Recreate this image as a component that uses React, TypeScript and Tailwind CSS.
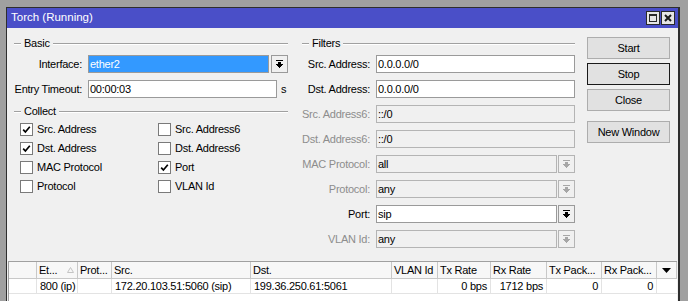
import React from "react";

const F = "font-['Liberation_Sans',Arial,sans-serif]";

function Arrow({ off }: { off?: boolean }) {
  const c = off ? "#a6a6a6" : "#000000";
  return (
    <svg width="7" height="8" viewBox="0 0 7 8" shapeRendering="crispEdges">
      <rect x="0" y="0" width="7" height="1" fill={c} />
      <rect x="2" y="2" width="3" height="2" fill={c} />
      <rect x="0" y="4" width="7" height="1" fill={c} />
      <rect x="1" y="5" width="5" height="1" fill={c} />
      <rect x="2" y="6" width="3" height="1" fill={c} />
      <rect x="3" y="7" width="1" height="1" fill={c} />
    </svg>
  );
}

function DropBtn({ off }: { off?: boolean }) {
  return (
    <div
      className={`w-[17px] h-[18px] flex items-center justify-center border ${
        off ? "border-[#b4b4b4]" : "border-[#9a9a9a]"
      } bg-[#f0f0f0]`}
    >
      <Arrow off={off} />
    </div>
  );
}

function GroupHead({ title }: { title: string }) {
  return (
    <div className="flex items-center h-[13px]">
      <div className="w-[7px] h-[2px] border-t border-[#a0a0a0] border-b border-b-white" />
      <span className="px-[3px] leading-[13px]">{title}</span>
      <div className="flex-1 h-[2px] border-t border-[#a0a0a0] border-b border-b-white" />
    </div>
  );
}

function Box({ value, off, selected, width }: { value: string; off?: boolean; selected?: boolean; width: string }) {
  return (
    <div
      className={`${width} h-[18px] border ${off ? "border-[#b4b4b4] bg-[#f0f0f0]" : "border-[#9a9a9a] bg-white"} flex items-center`}
    >
      {selected ? (
        <div className="flex-1 h-full bg-[#3399ff] text-white flex items-center pl-[1px]">{value}</div>
      ) : (
        <span className="pl-[1px]">{value}</span>
      )}
    </div>
  );
}

function Label({ text, off }: { text: string; off?: boolean }) {
  return (
    <div className={`w-[68px] shrink-0 flex justify-end whitespace-nowrap ${off ? "text-[#8d8d8d]" : "text-black"}`}>
      <span>{text}</span>
    </div>
  );
}

function FilterRow({ label, value, off, drop }: { label: string; value: string; off?: boolean; drop?: boolean }) {
  return (
    <div className="flex items-center h-[18px] mt-[7px]">
      <Label text={label} off={off} />
      <div className="ml-[6px] flex gap-[1px]">
        <Box value={value} off={off} width={drop ? "w-[181px]" : "w-[199px]"} />
        {drop && <DropBtn off={off} />}
      </div>
    </div>
  );
}

function Check({ label, on }: { label: string; on?: boolean }) {
  return (
    <div className="flex items-center h-[19px]">
      <div className="w-[13px] h-[13px] border border-[#7a7a7a] bg-white flex items-center justify-center">
        {on && (
          <svg width="9" height="9" viewBox="0 0 9 9">
            <polyline points="1.2,4.6 3.4,7 7.8,1.8" fill="none" stroke="#000" strokeWidth="1.7" />
          </svg>
        )}
      </div>
      <span className="ml-[4px]">{label}</span>
    </div>
  );
}

function Btn({ label, def, mt }: { label: string; def?: boolean; mt: string }) {
  return (
    <div
      className={`${mt} h-[22px] w-[83px] flex items-center justify-center bg-[#e1e1e1] border ${
        def ? "border-[#1a1a1a]" : "border-[#adadad]"
      }`}
    >
      {label}
    </div>
  );
}

const cols = [
  { w: "w-[28px]", h: "", v: "" },
  { w: "w-[41px]", h: "Et...", v: "800 (ip)", sort: true },
  { w: "w-[34px]", h: "Prot...", v: "" },
  { w: "w-[139px]", h: "Src.", v: "172.20.103.51:5060 (sip)" },
  { w: "w-[141px]", h: "Dst.", v: "199.36.250.61:5061" },
  { w: "w-[46px]", h: "VLAN Id", v: "" },
  { w: "w-[53px]", h: "Tx Rate", v: "0 bps", r: true },
  { w: "w-[56px]", h: "Rx Rate", v: "1712 bps", r: true },
  { w: "w-[55px]", h: "Tx Pack...", v: "0", r: true },
  { w: "w-[55px]", h: "Rx Pack...", v: "0", r: true },
];

export default function App() {
  return (
    <div className={`${F} text-[11px] tracking-[-0.25px] text-black w-[688px] h-[301px] bg-[#a0a0a0] overflow-hidden pt-[7px] pl-[6px]`}>
      <div className="w-[674px] h-[300px] border-t border-l border-r-2 border-[#2e2e2e] flex flex-col">
        {/* title bar */}
        <div className="h-[20px] bg-[#4a4fc8] flex items-center pl-[4px] pr-[3px]">
          <span className="text-white text-[11.5px] tracking-normal flex-1">Torch (Running)</span>
          <div className="flex gap-[1px]">
            <div className="w-[14px] h-[14px] border border-[#2a2a2a] bg-[#e6e6e6] flex items-center justify-center">
              <div className="w-[8px] h-[8px] border border-t-2 border-[#2a2a2a]" />
            </div>
            <div className="w-[14px] h-[14px] border border-[#2a2a2a] bg-[#e6e6e6] flex items-center justify-center">
              <svg width="8" height="8" viewBox="0 0 8 8">
                <path d="M1 1 L7 7 M7 1 L1 7" stroke="#1a1a1a" strokeWidth="2" />
              </svg>
            </div>
          </div>
        </div>

        {/* body */}
        <div className="flex-1 bg-[#f0f0f0] flex flex-col">
          <div className="flex pl-[7px] pt-[9px]">
            {/* left column */}
            <div className="w-[274px] flex flex-col">
              <GroupHead title="Basic" />
              <div className="flex items-center h-[18px] mt-[5px]">
                <Label text="Interface:" />
                <div className="ml-[6px] flex gap-[2px]">
                  <Box value="ether2" selected width="w-[181px]" />
                  <DropBtn />
                </div>
              </div>
              <div className="flex items-center h-[18px] mt-[7px]">
                <Label text="Entry Timeout:" />
                <div className="ml-[6px]">
                  <Box value="00:00:03" width="w-[189px]" />
                </div>
                <span className="ml-[4px]">s</span>
              </div>
              <div className="mt-[7px]">
                <GroupHead title="Collect" />
              </div>
              <div className="mt-[2px] pl-[6px] grid grid-cols-[138px_1fr]">
                <Check label="Src. Address" on />
                <Check label="Src. Address6" />
                <Check label="Dst. Address" on />
                <Check label="Dst. Address6" />
                <Check label="MAC Protocol" />
                <Check label="Port" on />
                <Check label="Protocol" />
                <Check label="VLAN Id" />
              </div>
            </div>

            {/* filters column */}
            <div className="ml-[14px] w-[273px] flex flex-col">
              <GroupHead title="Filters" />
              <div className="-mt-[2px]" />
              <FilterRow label="Src. Address:" value="0.0.0.0/0" />
              <FilterRow label="Dst. Address:" value="0.0.0.0/0" />
              <FilterRow label="Src. Address6:" value="::/0" off />
              <FilterRow label="Dst. Address6:" value="::/0" off />
              <FilterRow label="MAC Protocol:" value="all" off drop />
              <FilterRow label="Protocol:" value="any" off drop />
              <FilterRow label="Port:" value="sip" drop />
              <FilterRow label="VLAN Id:" value="any" off drop />
            </div>

            {/* buttons */}
            <div className="ml-[12px] flex flex-col">
              <Btn label="Start" mt="mt-0" />
              <Btn label="Stop" def mt="mt-[4px]" />
              <Btn label="Close" mt="mt-[4px]" />
              <Btn label="New Window" mt="mt-[10px]" />
            </div>
          </div>

          {/* table */}
          <div className="ml-[1px] mt-[13px] w-[669px] flex-1 border-t border-l border-[#a0a0a0] bg-white flex flex-col">
            <div className="flex h-[17px] border-b border-[#c8c8c8] bg-[#f7f7f7]">
              {cols.map((c, i) => (
                <div key={i} className={`${c.w} h-full border-r border-[#c8c8c8] flex items-center pl-[2px] pr-[3px] justify-between`}>
                  <span className="whitespace-nowrap">{c.h}</span>
                  {c.sort && (
                    <svg width="7" height="6" viewBox="0 0 7 6">
                      <polygon points="3.5,0.5 6.5,5.5 0.5,5.5" fill="none" stroke="#c4c4c4" strokeWidth="1" />
                    </svg>
                  )}
                </div>
              ))}
              <div className="w-[20px] h-full border-r border-[#c8c8c8] flex items-center justify-center">
                <svg width="9" height="5" viewBox="0 0 9 5">
                  <polygon points="0,0 9,0 4.5,5" fill="#000" />
                </svg>
              </div>
            </div>
            <div className="flex h-[15px] border-b border-[#e3e3e3]">
              {cols.map((c, i) => (
                <div
                  key={i}
                  className={`${c.w} h-full border-r border-[#e3e3e3] flex items-center px-[3px] whitespace-nowrap ${
                    c.r ? "justify-end" : ""
                  }`}
                >
                  {c.v}
                </div>
              ))}
              <div className="w-[20px] h-full" />
            </div>
          </div>
        </div>
      </div>
    </div>
  );
}
